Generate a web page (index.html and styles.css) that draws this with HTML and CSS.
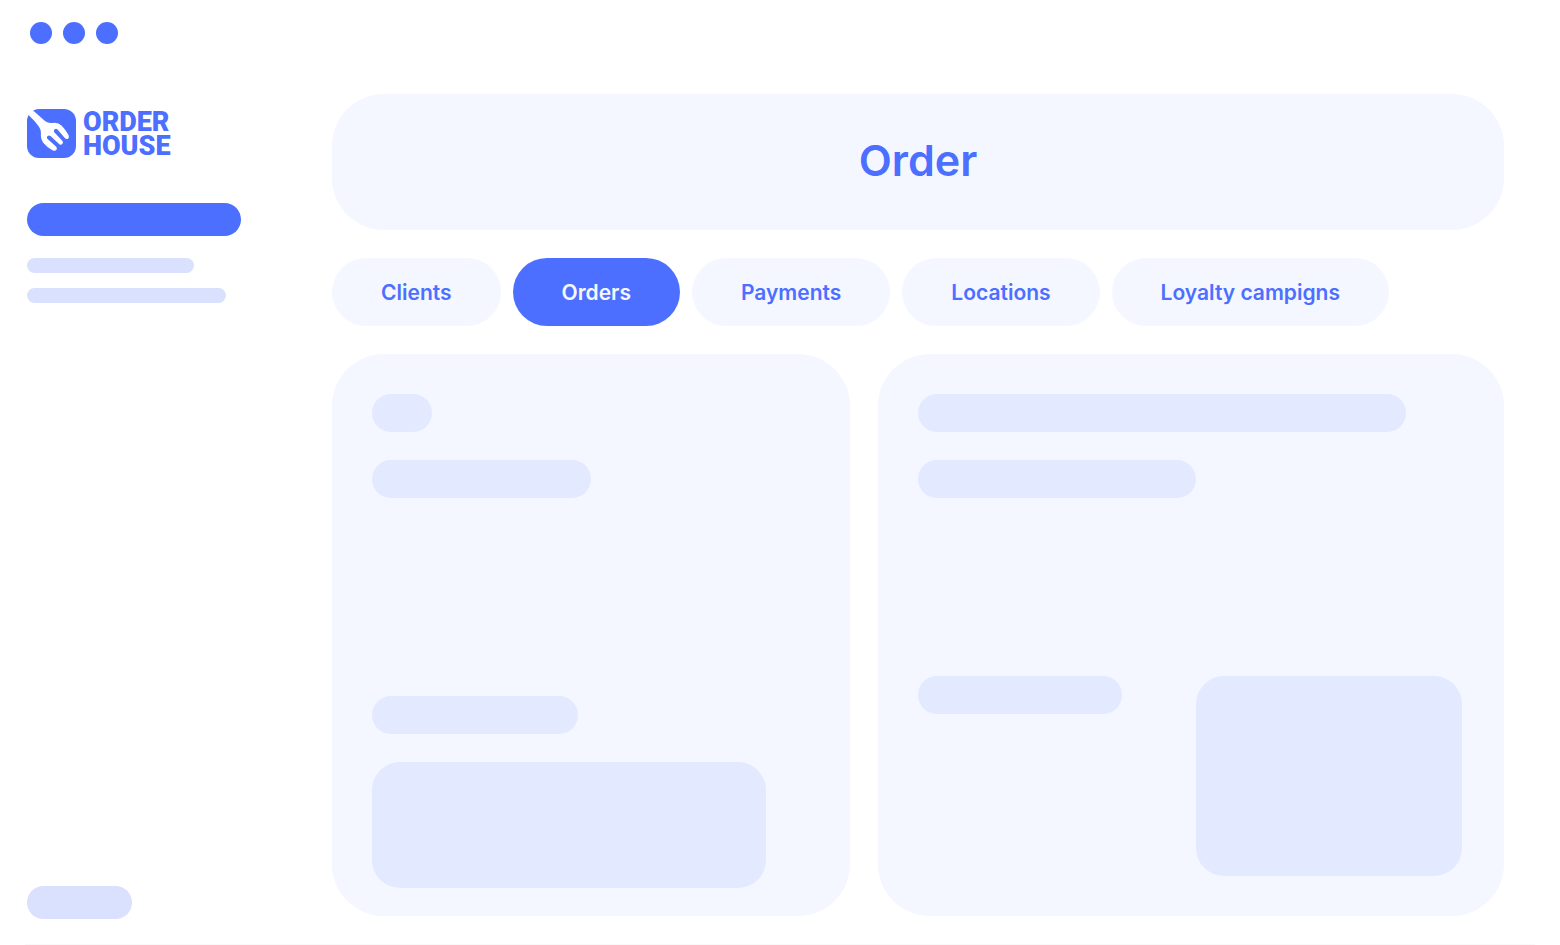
FILE: index.html
```html
<!DOCTYPE html>
<html lang="en">
<head>
  <meta charset="UTF-8">
  <meta name="viewport" content="width=device-width, initial-scale=1">
  <title>Order House</title>
  <link rel="stylesheet" href="styles.css">
</head>
<body>
  <div class="window">
    <div class="dots">
      <span class="dot"></span>
      <span class="dot"></span>
      <span class="dot"></span>
    </div>

    <div class="layout">
      <aside class="sidebar">
        <a class="logo" href="#">
          <svg class="logo-icon" viewBox="0 0 49 49" aria-hidden="true">
            <rect width="49" height="49" rx="12" fill="#4c6fff"/>
            <path fill="#fff" d="M-1 -1 H5.5 V1 L18 12 Q21 14.400 25 14 Q31 13 34.500 16.500 Q38 20 41.500 26 Q42.500 28.500 41 29.700 Q39.500 30.500 38 29.200 L30.500 20.500 Q29 19.200 27.500 20.500 Q26.200 22 27.500 23.500 L35.500 32 Q36.500 33.500 35.300 35 Q34 36.300 32.400 35.200 L23.500 27 Q22 25.800 20.600 27 Q19.300 28.500 20.600 30 L29 37.500 Q30.500 39.500 29.300 41 Q28 42.400 25.500 41.200 Q19.500 38 16 33.500 Q13.600 30.500 13.900 25.500 Q14.300 21 12 17.800 Q7.500 11.500 1.500 6 H-1 Z"/>
          </svg>
          <span class="logo-text">ORDER<br>HOUSE</span>
        </a>
        <div class="menu">
          <div class="menu-active"></div>
          <div class="menu-line"></div>
          <div class="menu-line menu-line-long"></div>
        </div>
        <div class="menu-bottom"></div>
      </aside>

      <main class="main">
        <header class="header">
          <h1>Order</h1>
        </header>

        <nav class="tabs">
          <button type="button" class="tab">Clients</button>
          <button type="button" class="tab active">Orders</button>
          <button type="button" class="tab">Payments</button>
          <button type="button" class="tab">Locations</button>
          <button type="button" class="tab">Loyalty campigns</button>
        </nav>

        <div class="cards">
          <section class="card card-left">
            <div class="bar bar-tiny"></div>
            <div class="bar bar-half"></div>
            <div class="bar bar-label"></div>
            <div class="block block-wide"></div>
          </section>

          <section class="card card-right">
            <div class="bar bar-title"></div>
            <div class="bar bar-subtitle"></div>
            <div class="card-row">
              <div class="bar bar-note"></div>
              <div class="block block-box"></div>
            </div>
          </section>
        </div>
      </main>
    </div>
  </div>
</body>
</html>
```
FILE: styles.css
```css
* { box-sizing: border-box; }

body { margin: 0; background: #fff; font-family: Inter, sans-serif; color: #4c6fff; }

.window { display: flex; flex-direction: column; min-height: 100vh; margin: 0 25px; border-bottom: 1px solid #f9f9f9; }

/* window dots */
.dots { display: flex; gap: 11px; padding: 22px 5px 50px; }
.dot { width: 22px; height: 22px; border-radius: 50%; background: #4c6fff; }

.layout { flex: 1; display: flex; }

/* sidebar */
.sidebar { display: flex; flex-direction: column; flex: 0 0 307px; padding: 15px 0 25px 2px; }
.logo { display: flex; align-items: center; gap: 7px; color: #4c6fff; text-decoration: none; }
.logo-icon { width: 49px; height: 49px; }
.logo-text { font-family: Roboto, sans-serif; font-size: 27px; font-weight: 900; line-height: 24px; }
.menu { margin-top: 45px; }
.menu-active { width: 214px; height: 33px; margin-bottom: 22px; border-radius: 17px; background: #4c6fff; }
.menu-line { width: 167px; height: 15px; margin-bottom: 15px; border-radius: 8px; background: #dae1ff; }
.menu-line-long { width: 199px; }
.menu-bottom { width: 105px; height: 33px; margin-top: auto; border-radius: 17px; background: #dae1ff; }

/* main */
.main { flex: 1; display: flex; flex-direction: column; gap: 28px; padding: 0 31px 28px 0; }
.header { padding: 38px 40px 42px; border-radius: 52px; background: #f4f7ff; text-align: center; }
.header h1 { margin: 0; font-size: 43px; font-weight: 600; line-height: 56px; }

.tabs { display: flex; flex-wrap: wrap; gap: 12px; }
.tab { padding: 21px 49px 19px; border: none; border-radius: 34px; background: #f4f7ff; color: #4c6fff; font-family: inherit; font-size: 21px; font-weight: 600; line-height: 28px; cursor: pointer; }
.tab.active { background: #4c6fff; color: #f4f7ff; }

.cards { flex: 1; display: grid; grid-template-columns: 518fr 626fr; gap: 28px; }
.card { display: flex; flex-direction: column; gap: 28px; padding: 40px; border-radius: 52px; background: #f4f7ff; }
.card-left { padding-bottom: 28px; }

/* placeholders */
.bar { height: 38px; border-radius: 19px; background: #e3e9ff; }
.bar-tiny { width: 60px; }
.bar-half { width: 50%; }
.bar-label { width: 47%; margin-top: auto; }
.bar-title { width: 488px; max-width: 100%; }
.bar-subtitle { width: 51%; }
.bar-note { width: 204px; }
.block { border-radius: 28px; background: #e3e9ff; }
.block-wide { width: 90%; height: 126px; }
.block-box { width: 266px; height: 200px; }
.card-row { display: flex; justify-content: space-between; margin-top: auto; padding-right: 2px; }
```
